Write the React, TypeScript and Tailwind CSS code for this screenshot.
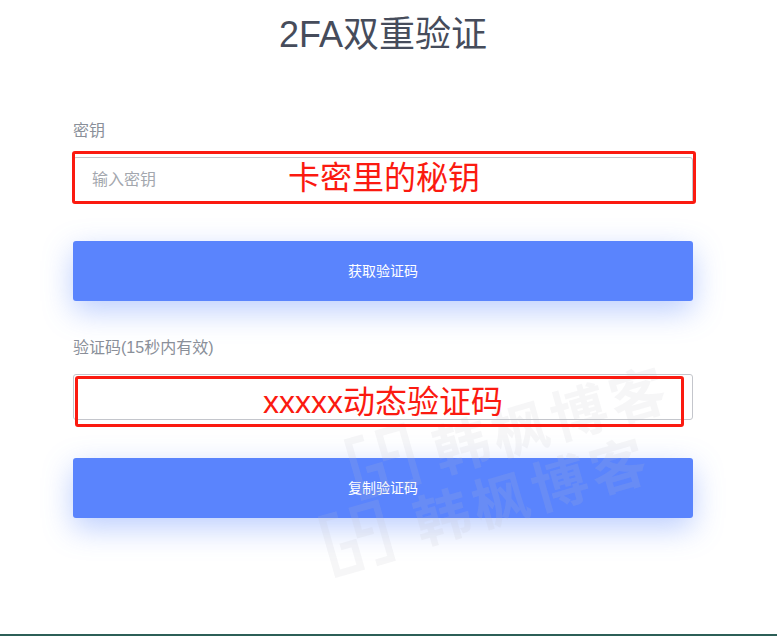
const cjk = 'font-["Liberation_Sans","Noto_Sans_CJK_SC",sans-serif]'

function Watermark({ className, textClass }: { className: string; textClass: string }) {
  return (
    <div className={`absolute flex items-center origin-left -rotate-[16deg] pointer-events-none text-[rgba(190,190,195,0.14)] ${className}`}>
      <svg width="64" height="65" viewBox="0 0 64 65" fill="none" stroke="currentColor" strokeWidth="7">
        <path d="M20 4H4V61H28V36H14" />
        <path d="M44 61H60V4H36V29H50" />
      </svg>
      <span className={`text-[56px] leading-none font-bold whitespace-nowrap tracking-[5px] ${textClass}`}>韩枫博客</span>
    </div>
  )
}

function Field({ label, placeholder, topClass }: { label: string; placeholder?: string; topClass: string }) {
  return (
    <div className={topClass}>
      <label className="block text-[16px] leading-[20px] text-[#8a8f99] mb-[16px]">{label}</label>
      <input
        readOnly
        placeholder={placeholder}
        className="block w-full h-[46px] px-[18px] bg-transparent border border-[#c4c6cc] rounded-[3px] text-[16px] placeholder:text-[#a3a7ae] outline-none"
      />
    </div>
  )
}

function Submit({ children }: { children: string }) {
  return (
    <button className="block w-full h-[60px] bg-[#5a84fd] rounded-[3px] text-white text-[14px] shadow-[0_10px_30px_0_rgba(87,132,253,0.4)]">
      {children}
    </button>
  )
}

export default function App() {
  return (
    <div className={`relative h-[636px] overflow-hidden bg-white flex flex-col ${cjk}`}>
      <div className="flex-1 w-[620px] ml-[73px]">
        <h1 className="pt-[10px] text-[36px] leading-[50px] text-center text-[#464c5b]">2FA双重验证</h1>
        <Field label="密钥" placeholder="输入密钥" topClass="mt-[61px]" />
        <div className="mt-[38px]">
          <Submit>获取验证码</Submit>
        </div>
        <Field label="验证码(15秒内有效)" topClass="mt-[37px]" />
        <div className="mt-[38px]">
          <Submit>复制验证码</Submit>
        </div>
      </div>
      <div className="h-[2px] bg-[#2c5f57]" />

      <Watermark className="left-[352px] top-[438px]" textClass="ml-[20px] translate-y-[8px]" />
      <Watermark className="left-[326px] top-[515px]" textClass="ml-[28px] translate-y-[4px]" />

      {/* red annotations drawn on top of the screenshot */}
      <div className="absolute left-[72px] top-[151px] w-[624px] h-[53px] border-[3px] border-[#fb1a10] rounded-[3px] flex items-center">
        <span className="ml-[213px] text-[32px] leading-none text-[#fb1a10]">卡密里的秘钥</span>
      </div>
      <div className="absolute left-[75px] top-[376px] w-[609px] h-[51px] border-[3px] border-[#fb1a10] rounded-[3px] flex items-center">
        <span className="ml-[185px] text-[32px] leading-none text-[#fb1a10]">xxxxx动态验证码</span>
      </div>
    </div>
  )
}
